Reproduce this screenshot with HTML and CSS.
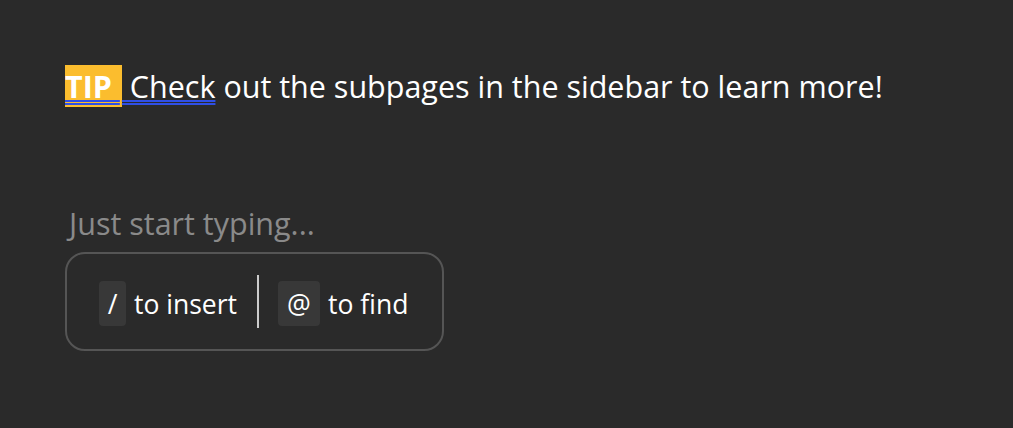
FILE: index.html
```html
<!DOCTYPE html>
<html>
<head>
<meta charset="utf-8">
<link rel="stylesheet" href="styles.css">
</head>
<body>
<main class="page">
  <p class="tip-line"><span class="link"><span class="tip">TIP&nbsp;</span>&nbsp;Check</span> out the subpages in the sidebar to learn more!</p>
  <p class="placeholder">Just start typing...</p>
  <div class="hints">
    <div class="hint"><span class="key key-slash">/</span><span>to insert</span></div>
    <div class="divider"></div>
    <div class="hint"><span class="key key-at">@</span><span>to find</span></div>
  </div>
</main>
</body>
</html>
```
FILE: styles.css
```css
html, body {
  margin: 0;
  background: #2a2a2a;
}
body {
  font-family: "Open Sans", "Noto Sans", sans-serif;
  color: #ffffff;
  width: 1013px;
  height: 428px;
  overflow: hidden;
}
.page {
  padding: 66px 0 0 65px;
}
.tip-line {
  margin: 0;
  font-size: 30.5px;
  line-height: 40px;
  white-space: nowrap;
}
.link {
  text-decoration: underline double #2f4fe6;
  text-decoration-thickness: 2px;
  text-underline-offset: 2px;
}
.tip {
  background: #fbbd2e;
  font-weight: 700;
  padding-right: 2px;
}
.placeholder {
  margin: 98px 0 0 4px;
  font-size: 30.5px;
  line-height: 38px;
  color: #8a8a8a;
}
.hints {
  margin-top: 10px;
  width: 379px;
  height: 99px;
  box-sizing: border-box;
  border: 2px solid #555555;
  border-radius: 20px;
  display: flex;
  align-items: center;
  padding-left: 32px;
  font-size: 26.5px;
}
.hint {
  display: flex;
  align-items: center;
  gap: 8px;
  margin-top: 4px;
}
.key {
  background: #383838;
  border-radius: 4px;
  height: 45px;
  display: flex;
  align-items: center;
  justify-content: center;
}
.key-slash { width: 27px; }
.key-at { width: 42px; }
.divider {
  width: 2px;
  height: 53px;
  background: #cccccc;
  margin: 0 19px 0 20px;
}
```
